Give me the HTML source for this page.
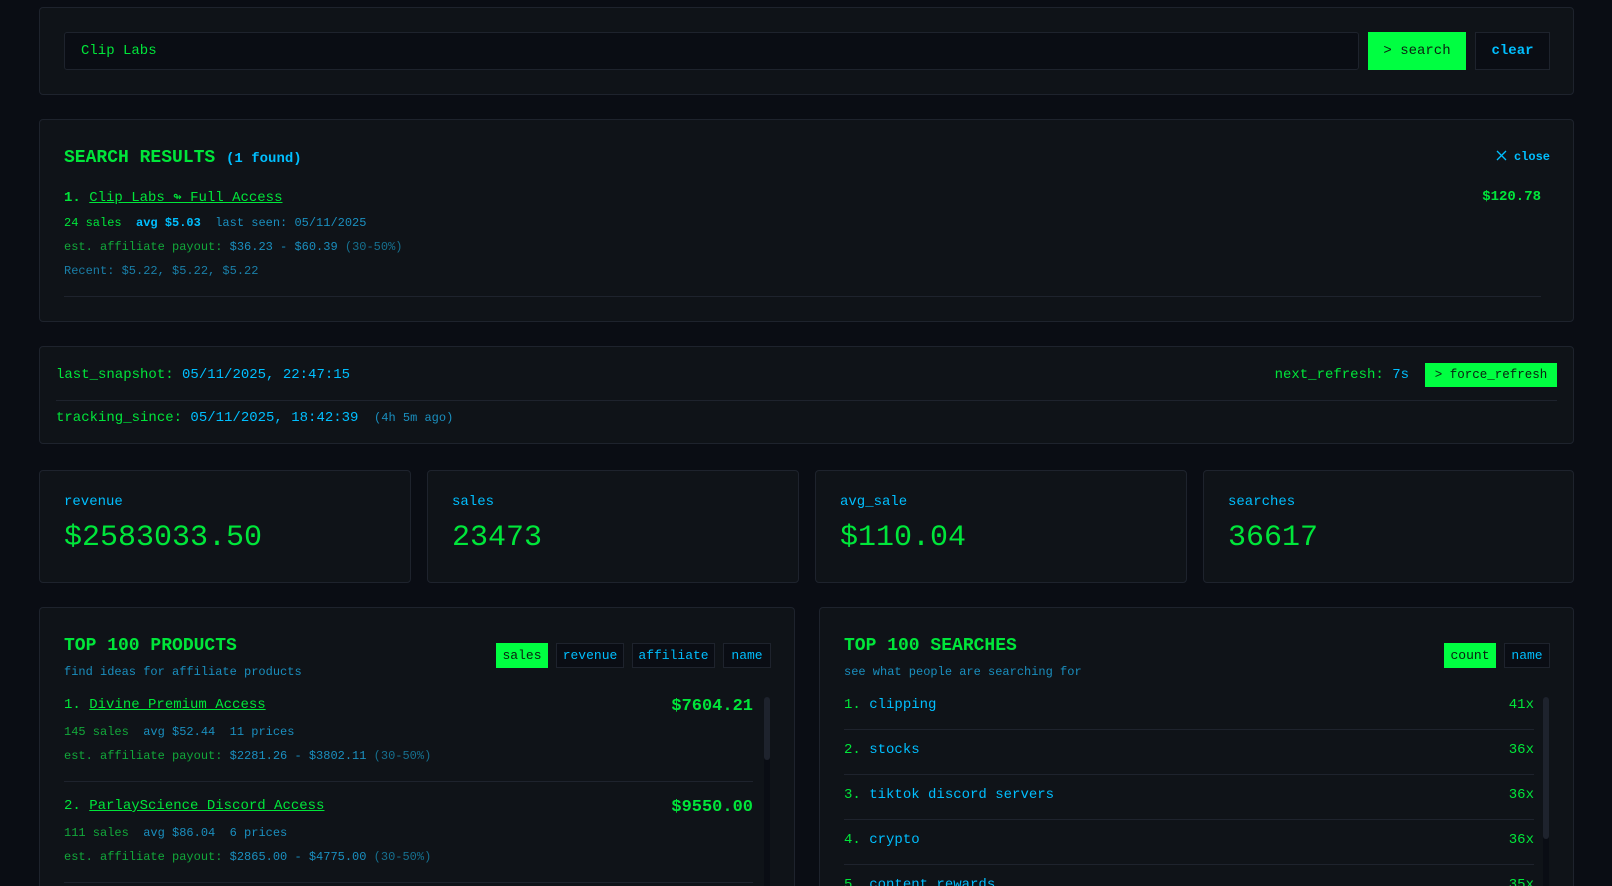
<!DOCTYPE html>
<html style="width:1612px;height:886px;overflow:hidden"><head><meta charset="utf-8"><style>
*{box-sizing:border-box;margin:0;padding:0}
body{width:1612px;height:886px;overflow:hidden;background:#0a0d14;font-family:"Liberation Mono",monospace;color:#00e63a;position:relative}
.p{position:absolute;background:#0f1318;border:1px solid #1e232d;border-radius:4px;overflow:hidden}
.g{color:#00e63a}.c{color:#00bfff}.d{color:#1a8fbf}.dg{color:#12a83a}
.abs{position:absolute;white-space:nowrap}
.btn{position:absolute;font-size:13px;display:flex;align-items:center;justify-content:center}
.on{background:#00ff41;color:#0a2010}
.off{background:#0a0d14;border:1px solid #1e232d;color:#00bfff}
a{color:#00e63a;text-decoration:underline}
.hr{position:absolute;height:1px;background:#1e232d}
.bp{border-bottom:none;border-bottom-left-radius:0;border-bottom-right-radius:0}
</style></head><body>
<div class="p" style="left:39px;top:7px;width:1535px;height:88px">
  <div class="abs" style="left:24px;top:24px;width:1295px;height:38px;background:#0a0d14;border:1px solid #1e232d;border-radius:3px;font-size:14px;line-height:36px;padding-left:16px">Clip Labs</div>
  <div class="btn on" style="left:1328px;top:24px;width:98px;height:38px;font-size:14px">&gt; search</div>
  <div class="btn off" style="left:1435px;top:24px;width:75px;height:38px;font-size:14px;font-weight:bold">clear</div>
</div>
<div class="p" style="left:39px;top:119px;width:1535px;height:203px">
  <div class="abs" style="left:24px;top:28px;font-size:18px;font-weight:bold">SEARCH RESULTS <span class="c" style="font-size:14px">(1 found)</span></div>
  <div class="abs c" style="right:23px;top:30px;font-size:12px;font-weight:bold"><svg width="11" height="11" viewBox="0 0 11 11" style="vertical-align:-1px"><path d="M1 1L10 10M10 1L1 10" stroke="#00bfff" stroke-width="1.3"/></svg> close</div>
  <div class="abs" style="left:24px;top:69px;font-size:14px"><b>1.</b> <a>Clip Labs ↬ Full Access</a></div>
  <div class="abs" style="right:32px;top:69px;font-size:14px;font-weight:bold">$120.78</div>
  <div class="abs" style="left:24px;top:96px;font-size:12px"><span class="g">24 sales</span>&nbsp; <span class="c" style="font-weight:bold">avg $5.03</span>&nbsp; <span class="d">last seen: 05/11/2025</span></div>
  <div class="abs" style="left:24px;top:120px;font-size:12px"><span class="dg">est. affiliate payout:</span> <span class="d">$36.23 - $60.39</span> <span style="color:#16708f">(30-50%)</span></div>
  <div class="abs d" style="left:24px;top:144px;font-size:12px;color:#1a7fa8">Recent: $5.22, $5.22, $5.22</div>
  <div class="hr" style="left:24px;right:32px;top:176px"></div>
</div>
<div class="p" style="left:39px;top:346px;width:1535px;height:98px">
  <div class="abs" style="left:16px;top:20px;font-size:14px">last_snapshot: <span class="c">05/11/2025, 22:47:15</span></div>
  <div class="abs" style="right:164px;top:20px;font-size:14px">next_refresh: <span class="c">7s</span></div>
  <div class="btn on" style="right:16px;top:16px;width:132px;height:24px;font-size:12.5px">&gt; force_refresh</div>
  <div class="hr" style="left:16px;right:16px;top:53px"></div>
  <div class="abs" style="left:16px;top:63px;font-size:14px">tracking_since: <span class="c">05/11/2025, 18:42:39</span> <span class="d" style="font-size:12px">&nbsp;(4h 5m ago)</span></div>
</div>
<div class="p" style="left:39px;top:470px;width:372px;height:113px"><div class="abs c" style="left:24px;top:23px;font-size:14px">revenue</div><div class="abs" style="left:24px;top:50px;font-size:30px">$2583033.50</div></div>
<div class="p" style="left:427px;top:470px;width:372px;height:113px"><div class="abs c" style="left:24px;top:23px;font-size:14px">sales</div><div class="abs" style="left:24px;top:50px;font-size:30px">23473</div></div>
<div class="p" style="left:815px;top:470px;width:372px;height:113px"><div class="abs c" style="left:24px;top:23px;font-size:14px">avg_sale</div><div class="abs" style="left:24px;top:50px;font-size:30px">$110.04</div></div>
<div class="p" style="left:1203px;top:470px;width:371px;height:113px"><div class="abs c" style="left:24px;top:23px;font-size:14px">searches</div><div class="abs" style="left:24px;top:50px;font-size:30px">36617</div></div>

<div class="p bp" style="left:39px;top:607px;width:756px;height:279px">
  <div class="abs" style="left:24px;top:28px;font-size:18px;font-weight:bold">TOP 100 PRODUCTS</div>
  <div class="abs d" style="left:24px;top:57px;font-size:12px">find ideas for affiliate products</div>
  <div class="btn on" style="left:456px;top:35px;width:52px;height:25px">sales</div>
  <div class="btn off" style="left:516px;top:35px;width:68px;height:25px">revenue</div>
  <div class="btn off" style="left:592px;top:35px;width:83px;height:25px">affiliate</div>
  <div class="btn off" style="left:683px;top:35px;width:48px;height:25px">name</div>
  <div class="abs" style="left:24px;top:89px;font-size:14px">1. <a>Divine Premium Access</a></div>
  <div class="abs" style="right:41px;top:89px;font-size:17px;font-weight:bold">$7604.21</div>
  <div class="abs" style="left:24px;top:117px;font-size:12px"><span class="dg">145 sales</span>&nbsp; <span class="d">avg $52.44</span>&nbsp; <span class="d">11 prices</span></div>
  <div class="abs" style="left:24px;top:141px;font-size:12px"><span class="dg">est. affiliate payout:</span> <span class="d">$2281.26 - $3802.11</span> <span style="color:#16708f">(30-50%)</span></div>
  <div class="hr" style="left:24px;right:41px;top:173px"></div>
  <div class="abs" style="left:24px;top:190px;font-size:14px">2. <a>ParlayScience Discord Access</a></div>
  <div class="abs" style="right:41px;top:190px;font-size:17px;font-weight:bold">$9550.00</div>
  <div class="abs" style="left:24px;top:218px;font-size:12px"><span class="dg">111 sales</span>&nbsp; <span class="d">avg $86.04</span>&nbsp; <span class="d">6 prices</span></div>
  <div class="abs" style="left:24px;top:242px;font-size:12px"><span class="dg">est. affiliate payout:</span> <span class="d">$2865.00 - $4775.00</span> <span style="color:#16708f">(30-50%)</span></div>
  <div class="hr" style="left:24px;right:41px;top:274px"></div>
  <div class="abs" style="left:724px;top:89px;width:6px;height:190px;background:#0a0d14;border-radius:3px 3px 0 0"><div style="height:63px;background:#1e232d;border-radius:3px"></div></div>
</div>
<div class="p bp" style="left:819px;top:607px;width:755px;height:279px">
  <div class="abs" style="left:24px;top:28px;font-size:18px;font-weight:bold">TOP 100 SEARCHES</div>
  <div class="abs d" style="left:24px;top:57px;font-size:12px">see what people are searching for</div>
  <div class="btn on" style="left:624px;top:35px;width:52px;height:25px">count</div>
  <div class="btn off" style="left:684px;top:35px;width:46px;height:25px">name</div>
  <div class="abs" style="left:24px;top:89px;font-size:14px">1. <span class="c">clipping</span></div><div class="abs" style="right:39px;top:89px;font-size:14px">41x</div>
  <div class="hr" style="left:24px;right:39px;top:121px"></div>
  <div class="abs" style="left:24px;top:134px;font-size:14px">2. <span class="c">stocks</span></div><div class="abs" style="right:39px;top:134px;font-size:14px">36x</div>
  <div class="hr" style="left:24px;right:39px;top:166px"></div>
  <div class="abs" style="left:24px;top:179px;font-size:14px">3. <span class="c">tiktok discord servers</span></div><div class="abs" style="right:39px;top:179px;font-size:14px">36x</div>
  <div class="hr" style="left:24px;right:39px;top:211px"></div>
  <div class="abs" style="left:24px;top:224px;font-size:14px">4. <span class="c">crypto</span></div><div class="abs" style="right:39px;top:224px;font-size:14px">36x</div>
  <div class="hr" style="left:24px;right:39px;top:256px"></div>
  <div class="abs" style="left:24px;top:269px;font-size:14px">5. <span class="c">content rewards</span></div><div class="abs" style="right:39px;top:269px;font-size:14px">35x</div>
  <div class="abs" style="left:723px;top:89px;width:6px;height:190px;background:#0a0d14;border-radius:3px 3px 0 0"><div style="height:142px;background:#1e232d;border-radius:3px"></div></div>
</div>
</body></html>
